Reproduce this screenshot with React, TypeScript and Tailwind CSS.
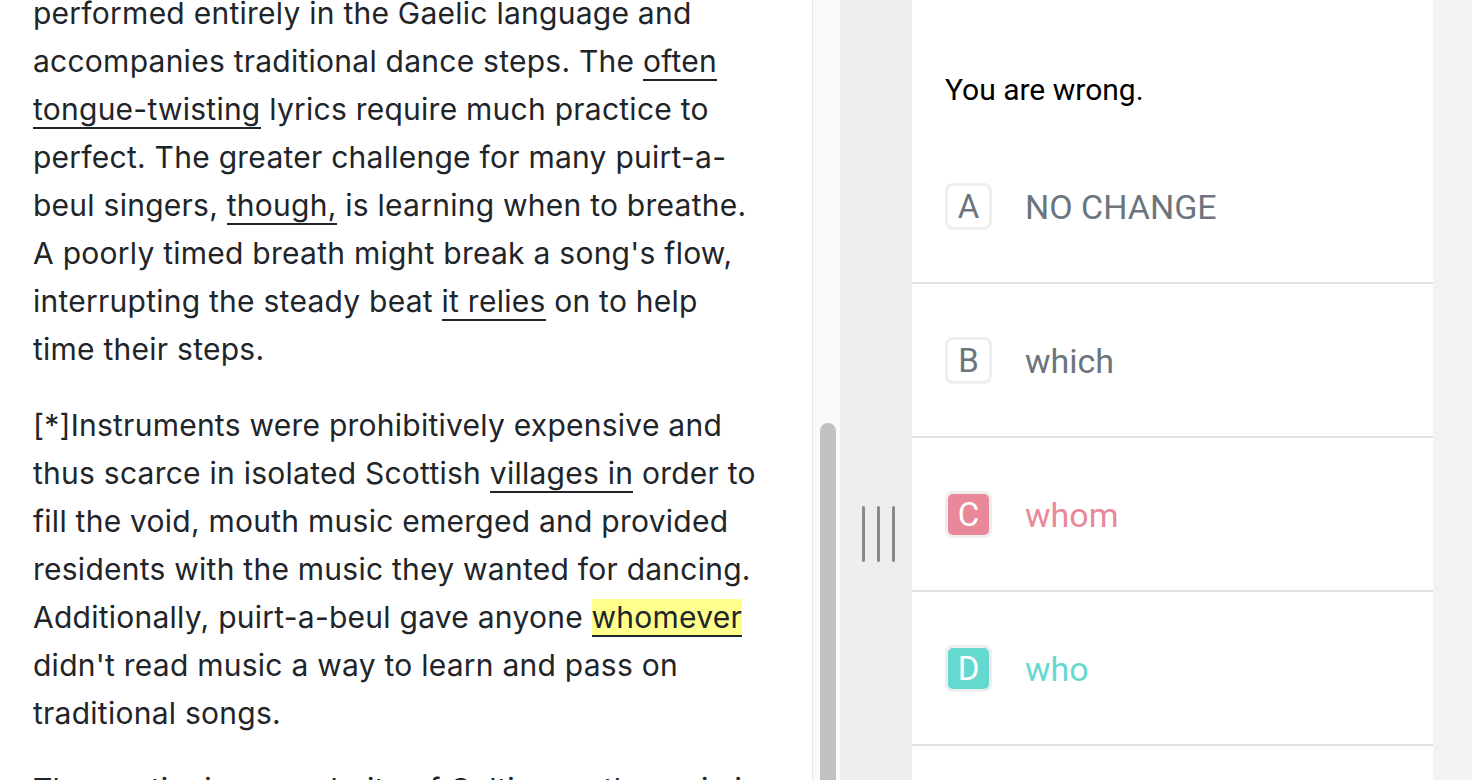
import type { ReactNode } from "react";

type Seg = string | { u: string; hl?: boolean };

const passage: Seg[][][] = [
  [
    ["performed entirely in the Gaelic language and"],
    ["accompanies traditional dance steps. The ", { u: "often" }],
    [{ u: "tongue-twisting" }, " lyrics require much practice to"],
    ["perfect. The greater challenge for many puirt-a-"],
    ["beul singers, ", { u: "though," }, " is learning when to breathe."],
    ["A poorly timed breath might break a song's flow,"],
    ["interrupting the steady beat ", { u: "it relies" }, " on to help"],
    ["time their steps."],
  ],
  [
    ["[*]Instruments were prohibitively expensive and"],
    ["thus scarce in isolated Scottish ", { u: "villages in" }, " order to"],
    ["fill the void, mouth music emerged and provided"],
    ["residents with the music they wanted for dancing."],
    ["Additionally, puirt-a-beul gave anyone ", { u: "whomever", hl: true }],
    ["didn't read music a way to learn and pass on"],
    ["traditional songs."],
  ],
  [["The continuing popularity of Celtic mouth music is"]],
];

const options = [
  { letter: "A", text: "NO CHANGE", state: "idle" },
  { letter: "B", text: "which", state: "idle" },
  { letter: "C", text: "whom", state: "wrong" },
  { letter: "D", text: "who", state: "right" },
];

function renderSeg(seg: Seg, i: number): ReactNode {
  if (typeof seg === "string") return <span key={i}>{seg}</span>;
  return (
    <span
      key={i}
      className={`border-b-2 border-[#212529] ${seg.hl ? "bg-[#ffff8c]" : ""}`}
    >
      {seg.u}
    </span>
  );
}

function Passage() {
  return (
    <div className="w-[812px] flex-none overflow-hidden bg-white pl-[33px] font-['Inter',sans-serif] text-[30px] leading-[48px] tracking-[0.25px] text-[#212529]">
      {passage.map((para, p) => (
        <p key={p} className={p === 0 ? "-mt-[11px]" : "mt-[28px]"}>
          {para.map((line, l) => (
            <span key={l} className="block whitespace-nowrap">
              {line.map(renderSeg)}
            </span>
          ))}
        </p>
      ))}
    </div>
  );
}

function LetterBox({ letter, state }: { letter: string; state: string }) {
  const fill =
    state === "wrong"
      ? "bg-[#e8889a] text-white"
      : state === "right"
        ? "bg-[#64d9cf] text-white"
        : "bg-white text-[#6c757d]";
  return (
    <div
      className={`flex h-[47px] w-[47px] flex-none items-center justify-center rounded-[8px] border-[3px] border-[#eeeeee] text-[33px] leading-none ${fill}`}
    >
      {letter}
    </div>
  );
}

export default function App() {
  return (
    <div className="flex h-[780px] w-[1472px] overflow-hidden bg-[#f3f3f3]">
      <Passage />

      {/* scrollbar of the passage */}
      <div className="flex w-[28px] flex-none flex-col border-l border-[#e6e6e6] bg-[#fafafa]">
        <div className="ml-[7px] mt-[423px] w-[16px] flex-1 rounded-t-full bg-[#c1c1c1]" />
      </div>

      {/* resize gutter */}
      <div className="flex w-[72px] flex-none gap-[12px] bg-[#eeeeee] pl-[22px] pt-[506px]">
        <div className="h-[56px] w-[3px] rounded-full bg-[#8a8a8a]" />
        <div className="h-[56px] w-[3px] rounded-full bg-[#8a8a8a]" />
        <div className="h-[56px] w-[3px] rounded-full bg-[#8a8a8a]" />
      </div>

      <div className="w-[521px] flex-none bg-white font-['Roboto',sans-serif]">
        <div className="px-[33px] pb-[22px] pt-[72px] text-[30px] leading-[36px] text-black">
          You are wrong.
        </div>
        {options.map((o) => (
          <div
            key={o.letter}
            className="flex h-[154px] items-center border-b-2 border-[#dee2e6] px-[33px]"
          >
            <LetterBox letter={o.letter} state={o.state} />
            <span
              className={`ml-[33px] pt-[3px] text-[34px] ${
                o.state === "wrong"
                  ? "text-[#e8889a]"
                  : o.state === "right"
                    ? "text-[#64d9cf]"
                    : "text-[#6c757d]"
              }`}
            >
              {o.text}
            </span>
          </div>
        ))}
      </div>
    </div>
  );
}
